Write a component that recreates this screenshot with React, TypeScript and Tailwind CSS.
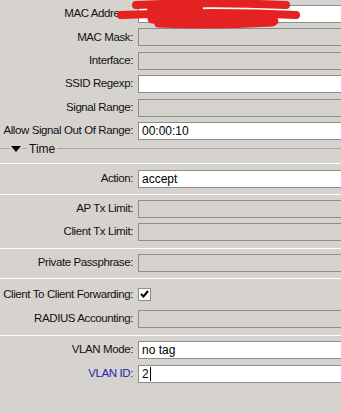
import React from 'react';

const font = { fontFamily: '"Liberation Sans", Arial, sans-serif' };

function Field({ label, value, enabled, blue, caret }: { label: string; value?: string; enabled?: boolean; blue?: boolean; caret?: boolean }) {
  return (
    <div className="flex items-center h-[18px]">
      <div className={`w-[134px] shrink-0 text-right pr-[1px] text-[11.5px] tracking-[-0.4px] leading-none whitespace-nowrap ${blue ? 'text-[#2323b0]' : 'text-[#111]'}`}>
        {label}
      </div>
      <div
        className={`ml-[4px] h-[18px] w-[220px] shrink-0 border border-[#8c8c8c] flex items-center pl-[3px] text-[12px] leading-none text-black ${
          enabled ? 'bg-white' : 'bg-[#d6d3ce]'
        }`}
      >
        {value}
        {caret && <span className="inline-block w-[1px] h-[14px] bg-black ml-[1px]" />}
      </div>
    </div>
  );
}

function Separator({ className }: { className: string }) {
  return <div className={`h-[1px] bg-[#a8a6a2] border-b border-white ${className}`} />;
}

export default function App() {
  return (
    <div className="relative w-[341px] h-[413px] overflow-hidden bg-[#d6d3ce]" style={font}>
      <div className="flex flex-col pt-[5px]">
        <div className="flex flex-col gap-[5.4px]">
          <Field label="MAC Address:" enabled />
          <Field label="MAC Mask:" />
          <Field label="Interface:" />
          <Field label="SSID Regexp:" enabled />
          <Field label="Signal Range:" />
          <Field label="Allow Signal Out Of Range:" value="00:00:10" enabled />
        </div>

        {/* Time header */}
        <div className="flex items-center h-[14px] mt-[2px]">
          <div className="w-[10px] h-[1px] bg-[#a8a6a2]" />
          <svg width="10" height="6" viewBox="0 0 10 6" className="mx-[1px]">
            <path d="M0 0 L10 0 L5 6 Z" fill="#000" />
          </svg>
          <div className="w-[5px] h-[1px] bg-[#a8a6a2]" />
          <span className="text-[12px] leading-none text-[#111] px-[2px]">Time</span>
          <div className="flex-1 h-[1px] bg-[#a8a6a2]" />
        </div>

        <Separator className="mt-[7px]" />
        <div className="mt-[6px]">
          <Field label="Action:" value="accept" enabled />
        </div>
        <Separator className="mt-[6px]" />

        <div className="flex flex-col gap-[5px] mt-[5px]">
          <Field label="AP Tx Limit:" />
          <Field label="Client Tx Limit:" />
        </div>
        <Separator className="mt-[7px]" />
        <div className="mt-[5px]">
          <Field label="Private Passphrase:" />
        </div>
        <Separator className="mt-[6px]" />

        <div className="flex items-center h-[13px] mt-[9px]">
          <div className="w-[134px] shrink-0 text-right pr-[1px] text-[11.5px] tracking-[-0.4px] leading-none text-[#111] whitespace-nowrap">
            Client To Client Forwarding:
          </div>
          <div className="ml-[4px] w-[13px] h-[13px] bg-white border border-[#8c8c8c] flex items-center justify-center">
            <svg width="9" height="8" viewBox="0 0 9 8">
              <path d="M1 4 L3.5 6.5 L8 1" stroke="#000" strokeWidth="2" fill="none" />
            </svg>
          </div>
        </div>
        <div className="mt-[9px]">
          <Field label="RADIUS Accounting:" />
        </div>
        <Separator className="mt-[7px]" />

        <div className="flex flex-col gap-[6px] mt-[5px]">
          <Field label="VLAN Mode:" value="no tag" enabled />
          <Field label="VLAN ID:" value="2" enabled blue caret />
        </div>
      </div>

      {/* redaction scribble */}
      <svg className="absolute left-0 top-0" width="341" height="40" viewBox="0 0 341 40">
        <g stroke="#e42222" strokeLinecap="round" fill="none">
          <path d="M136 5 C180 3, 240 3, 286 5" strokeWidth="8" />
          <path d="M121 15 C170 13, 240 12, 296 15" strokeWidth="8" />
          <path d="M152 19 C200 22, 240 20, 274 21" strokeWidth="9" />
          <path d="M158 24 C200 26, 240 25, 272 23" strokeWidth="7" />
          <path d="M150 10 L200 8" strokeWidth="6" />
        </g>
      </svg>
    </div>
  );
}
